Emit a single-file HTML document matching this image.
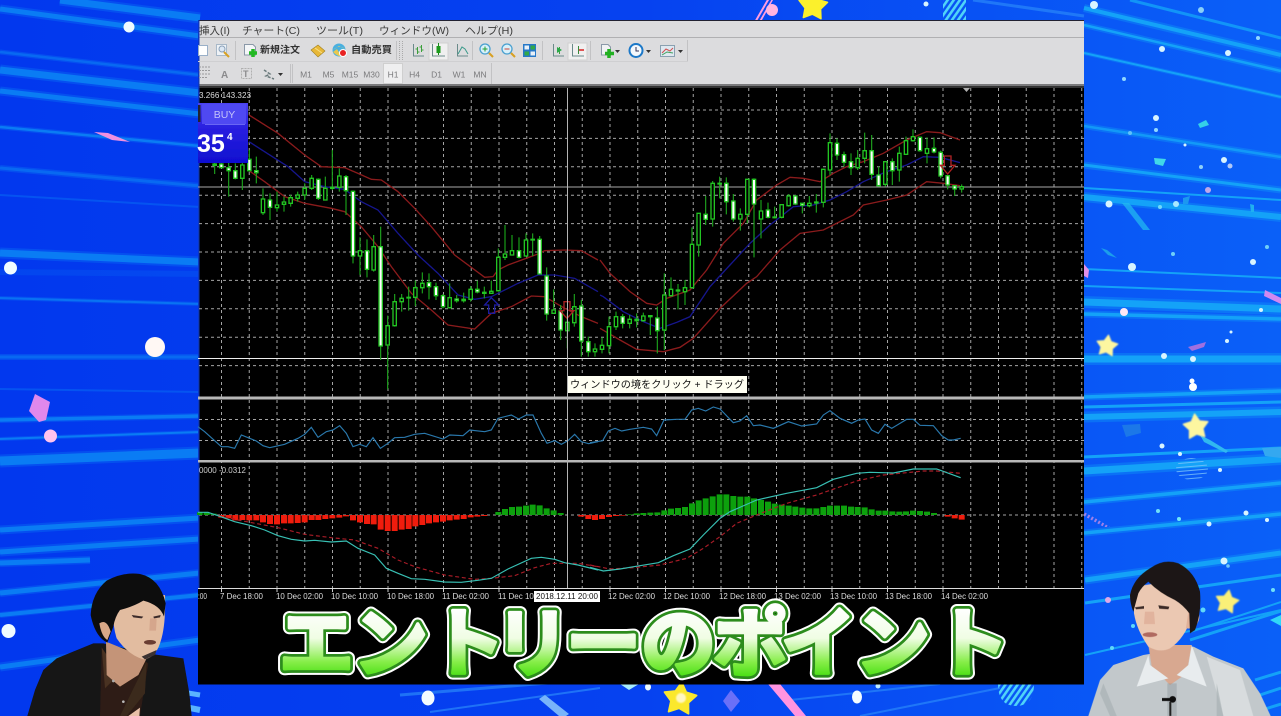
<!DOCTYPE html>
<html lang="ja"><head><meta charset="utf-8"><title>エントリーのポイント</title>
<style>html,body{margin:0;padding:0;background:#0a44f2;width:1281px;height:716px;overflow:hidden}svg{display:block}text{font-family:"Liberation Sans","Noto Sans CJK JP",sans-serif}</style></head>
<body>
<svg xmlns="http://www.w3.org/2000/svg" width="1281" height="716" viewBox="0 0 1281 716">
<defs>
<linearGradient id="bg" x1="0" x2="1" y1="0" y2="0"><stop offset="0" stop-color="#0238ee"/><stop offset=".5" stop-color="#0642f0"/><stop offset="1" stop-color="#0a60f8"/></linearGradient>
<linearGradient id="buy" x1="0" x2="0" y1="0" y2="1"><stop offset="0" stop-color="#4a42f0"/><stop offset=".4" stop-color="#2a20e0"/><stop offset="1" stop-color="#0f0fd0"/></linearGradient>
<linearGradient id="ttl" gradientUnits="userSpaceOnUse" x1="0" x2="0" y1="608" y2="680"><stop offset="0" stop-color="#fff"/><stop offset=".42" stop-color="#f0fde4"/><stop offset=".75" stop-color="#86ee48"/><stop offset="1" stop-color="#3cdc08"/></linearGradient>
<pattern id="cy" width="5" height="5" patternUnits="userSpaceOnUse" patternTransform="rotate(35)"><rect width="2.6" height="5" fill="#4fd4f8"/></pattern>
<pattern id="pk" width="4" height="4" patternUnits="userSpaceOnUse" patternTransform="rotate(30)"><rect width="2" height="4" fill="#ff9ce0"/></pattern>
<pattern id="lc" width="4" height="4" patternUnits="userSpaceOnUse" patternTransform="rotate(85)"><rect width="1" height="4" fill="#7cc4fa"/></pattern>
<filter id="b0" x="0" y="0" width="100%" height="100%"><feGaussianBlur stdDeviation=".35"/></filter>
<filter id="bf" x="-10%" y="-10%" width="120%" height="120%"><feGaussianBlur stdDeviation=".7"/></filter>
<filter id="bp" x="-10%" y="-10%" width="120%" height="120%"><feGaussianBlur stdDeviation="1.1"/></filter>
<polygon id="st" points="0,-1 .32,-.44 .95,-.31 .52,.17 .59,.81 0,.55 -.59,.81 -.52,.17 -.95,-.31 -.32,-.44" stroke-linejoin="round"/>
</defs>

<rect width="1281" height="716" fill="url(#bg)"/>

<!-- left streaks glow -->
<g stroke="#0a70f4" fill="none" opacity=".4">
<path d="M60 0L200 18" stroke-width="11"/><path d="M0 9L200 36" stroke-width="9"/><path d="M0 52L200 75" stroke-width="5"/><path d="M0 70L200 93" stroke-width="11"/><path d="M0 91L200 114" stroke-width="9"/><path d="M0 127L200 146" stroke-width="5"/><path d="M0 168L200 186" stroke-width="6"/><path d="M0 253L200 262" stroke-width="11"/><path d="M0 298L200 304" stroke-width="4"/><path d="M0 357L200 357" stroke-width="6"/><path d="M0 420L200 416" stroke-width="6"/><path d="M0 439L200 432" stroke-width="4"/><path d="M0 461L200 453" stroke-width="13"/><path d="M0 530L200 518" stroke-width="9"/><path d="M0 552L200 539" stroke-width="9"/><path d="M0 563L90 560" stroke-width="8"/><path d="M0 593L200 573" stroke-width="8"/><path d="M0 615L200 595" stroke-width="6"/><path d="M0 667L200 640" stroke-width="9"/>
</g>
<g stroke="#0a7cf4" fill="none">
<path d="M60 0L200 18" stroke-width="7"/><path d="M0 9L200 36" stroke-width="5"/><path d="M0 52L200 75" stroke-width="2.500" opacity=".6"/><path d="M0 70L200 93" stroke-width="7"/><path d="M0 91L200 114" stroke-width="5"/><path d="M0 127L200 146" stroke-width="2.500"/><path d="M0 168L200 186" stroke-width="3" opacity=".6"/><path d="M0 195L200 207" stroke-width="2" opacity=".4"/><path d="M0 253L200 262" stroke-width="7"/><path d="M0 272L200 274" stroke-width="6" opacity=".2"/><path d="M0 298L200 304" stroke-width="2" opacity=".8"/><path d="M0 357L200 357" stroke-width="3" opacity=".6"/><path d="M0 389L200 392" stroke-width="2" opacity=".4"/><path d="M0 420L200 416" stroke-width="3.500"/><path d="M0 439L200 432" stroke-width="2"/><path d="M0 461L200 453" stroke-width="9"/><path d="M0 530L200 518" stroke-width="5"/><path d="M0 552L200 539" stroke-width="5"/><path d="M0 563L90 560" stroke-width="5"/><path d="M0 593L200 573" stroke-width="5"/><path d="M0 615L200 595" stroke-width="4"/><path d="M0 667L200 640" stroke-width="5"/><path d="M188 693L200 695" stroke-width="5" stroke="#5ab4ff"/><path d="M190 708L200 710" stroke-width="6" stroke="#5ab4ff"/>
</g>
<!-- right streaks glow -->
<g stroke="#10a0f8" fill="none" opacity=".35">
<path d="M1084 8L1281 55" stroke-width="8"/><path d="M1084 25L1281 71" stroke-width="6"/><path d="M1084 53L1281 97" stroke-width="4"/><path d="M1084 126L1281 157" stroke-width="6"/><path d="M1084 165L1281 190" stroke-width="7"/><path d="M1084 197L1281 217" stroke-width="10"/><path d="M1084 302L1281 309" stroke-width="12"/><path d="M1084 314L1281 319" stroke-width="7"/><path d="M1084 359L1281 359" stroke-width="12"/><path d="M1084 397L1281 391" stroke-width="7"/><path d="M1084 417L1281 412" stroke-width="11"/><path d="M1084 471L1281 459" stroke-width="12"/><path d="M1084 502L1281 483" stroke-width="7"/><path d="M1084 533L1281 514" stroke-width="7"/><path d="M1085 580L1281 553" stroke-width="9"/>
</g>
<g stroke="#14a2f8" fill="none">
<path d="M1084 8L1281 55" stroke-width="4"/><path d="M1130 0L1281 38" stroke-width="3" opacity=".8"/><path d="M1084 25L1281 71" stroke-width="2.500"/><path d="M1084 53L1281 97" stroke-width="2"/><path d="M1084 126L1281 157" stroke-width="2.500" opacity=".8"/><path d="M1084 165L1281 190" stroke-width="3"/><path d="M1084 188L1281 200" stroke-width="2"/><path d="M1084 197L1281 217" stroke-width="6"/><path d="M1084 269L1281 278" stroke-width="2"/><path d="M1084 286L1281 293" stroke-width="2"/><path d="M1084 302L1281 309" stroke-width="7"/><path d="M1084 314L1281 319" stroke-width="3.500"/><path d="M1084 359L1281 359" stroke-width="7"/><path d="M1084 397L1281 391" stroke-width="3.500"/><path d="M1084 407L1281 402" stroke-width="3"/><path d="M1084 417L1281 412" stroke-width="6"/><path d="M1084 457L1281 448" stroke-width="3"/><path d="M1084 471L1281 459" stroke-width="7"/><path d="M1084 502L1281 483" stroke-width="3.500"/><path d="M1084 533L1281 514" stroke-width="3.500"/><path d="M1085 580L1281 553" stroke-width="5"/><path d="M1085 603L1281 575" stroke-width="3"/><path d="M1085 655L1281 610" stroke-width="2"/><path d="M1190 640L1281 611" stroke-width="3"/><path d="M1190 632L1281 602" stroke-width="2"/><path d="M1255 680L1281 672" stroke-width="3"/><path d="M1260 695L1281 688" stroke-width="3"/><path d="M1262 710L1281 704" stroke-width="3"/>
</g>
<!-- top/bottom streaks -->
<g stroke="#2a88fa" fill="none" opacity=".7"><path d="M973 0L1084 16" stroke-width="3"/><path d="M400 695L560 682" stroke-width="3"/><path d="M430 712L600 688" stroke-width="2"/><path d="M790 700L940 684" stroke-width="2"/><path d="M860 716L1000 688" stroke-width="2"/></g>

<!-- left decor -->
<g>
<polygon points="94,132 108,133 130,142 112,140" fill="#f090e0"/>
<polygon points="35,394 50,402 46,420 39,422 29,411" fill="#e088ec"/>
<circle cx="129" cy="27" r="5.500" fill="#eefcff"/><circle cx="10.500" cy="268" r="6.500" fill="#f0fcff"/><circle cx="155" cy="347" r="10" fill="#fff8f4"/><circle cx="50.500" cy="436" r="6.500" fill="#ffc4ee"/><circle cx="8.500" cy="631" r="7" fill="#f0fcff"/>
</g>
<!-- right decor -->
<g fill="#d8f4ff">
<circle cx="1094" cy="5" r="4"/><circle cx="1201" cy="10" r="3" fill="#8ad0f8"/><circle cx="1162" cy="49" r="3"/><circle cx="1228" cy="53" r="3"/><circle cx="1124" cy="79" r="2" fill="#90d8ff"/><circle cx="1258" cy="38" r="2" fill="#90d8ff"/><circle cx="1156" cy="118" r="3"/><circle cx="1156" cy="130" r="2" fill="#90d8ff"/><circle cx="1130" cy="133" r="2" fill="#60c0f8"/><circle cx="1185" cy="145" r="1.500"/><circle cx="1224" cy="160" r="3"/><circle cx="1230" cy="166" r="2.500" fill="#b0c8f8"/><circle cx="1201" cy="167" r="2" fill="#90d0f8"/><circle cx="1109" cy="204" r="3.500"/><circle cx="1176" cy="204" r="3" fill="#a8e8ff"/><circle cx="1160" cy="207" r="2" fill="#70d8f8"/><circle cx="1208" cy="190" r="3" fill="#c0a8e8"/><circle cx="1132" cy="267" r="4"/><circle cx="1253" cy="262" r="3"/><circle cx="1173" cy="254" r="2" fill="#70d0f8"/><circle cx="1267" cy="247" r="2" fill="#70d0f8"/><circle cx="1124" cy="312" r="4" fill="#ffe8f4"/><circle cx="1261" cy="310" r="2"/><circle cx="1227" cy="341" r="2"/><circle cx="1231" cy="332" r="1.500"/><circle cx="1164" cy="356" r="3"/><circle cx="1193" cy="359" r="3"/><circle cx="1193" cy="387" r="4" fill="#fff"/><circle cx="1192" cy="381" r="2.500" fill="#fff"/><circle cx="1162" cy="446" r="2.500"/><circle cx="1180" cy="454" r="2"/><circle cx="1220" cy="470" r="2"/><circle cx="1158" cy="511" r="2" fill="#70e0f8"/><circle cx="1179" cy="519" r="2" fill="#70e8f8"/><circle cx="1209" cy="524" r="2.500"/><circle cx="1246" cy="513" r="2.500"/><circle cx="1267" cy="520" r="2"/><circle cx="1224" cy="561" r="3.500"/><circle cx="1228" cy="566" r="1.800" fill="#70c8f8"/><circle cx="1108" cy="600" r="3" fill="#e0a8e8"/><circle cx="1203" cy="610" r="2.500" fill="#60d8f8"/><circle cx="1273" cy="590" r="2" fill="#70e0f8"/><circle cx="1133" cy="626" r="2" fill="#60d8f8"/><circle cx="1112" cy="648" r="2" fill="#60d8f8"/>
<polygon points="1206,120 1209,125 1200,128 1198,124" fill="#34d0e8"/>
<polygon points="1154,158 1166,159 1163,166 1155,164" fill="#40d8e8"/>
<polygon points="1122,203 1129,203 1150,230 1143,230" fill="#22b8f0" opacity=".75"/>
<polygon points="1101,248 1107,250 1117,258 1108,255" fill="#20b0e8" opacity=".8"/>
<polygon points="1084,264 1089,270 1088,278 1084,276" fill="#e090e8"/>
<polygon points="1265,290 1281,298 1281,304 1264,296" fill="#d088f0"/>
<polygon points="1188,347 1206,342 1204,347 1192,351" fill="#a070e0"/>
<polygon points="1200,435 1210,440 1228,451 1226,453 1204,442" fill="#30b8f0"/>
<polygon points="1122,425 1140,424 1141,433 1126,437" fill="#1c78e8"/>
<polygon points="1262,448 1281,447 1281,458 1265,456" fill="#34a8f0"/>
<polygon points="1183,198 1190,196 1188,204 1183,204" fill="#1c98f0"/>
<polygon points="1250,204 1254,205 1254,212 1251,212" fill="#20b0f0"/>
<ellipse cx="1192" cy="469" rx="16" ry="11" fill="url(#lc)" opacity=".8"/>
<polygon points="1084,512 1095,518 1110,527 1104,527 1084,516" fill="url(#pk)" opacity=".6"/>
<polygon points="1270,620 1281,615 1281,626" fill="#30d8f8"/>
</g>
<g fill="#fdf6a0" filter="url(#bf)">
<use href="#st" transform="translate(1107 346) scale(11) rotate(8)" stroke="#fdf6a0" stroke-width=".1"/>
<use href="#st" transform="translate(1196 427) scale(13) rotate(-6)" stroke="#fdf6a0" stroke-width=".1"/>
<use href="#st" transform="translate(1227 602) scale(12) rotate(10)" fill="#fbf078" stroke="#fbf078" stroke-width=".1"/>
</g>
<!-- top decor -->
<g>
<polygon points="755,20 766,0 773,0 762,20" fill="url(#pk)"/><circle cx="772" cy="10" r="6" fill="#ffb4e0"/>
<use href="#st" transform="translate(813 6) scale(15) rotate(4)" fill="#fbf02c" stroke="#fbf02c" stroke-width=".1"/>
<circle cx="926" cy="4" r="2.500" fill="#d8f4ff"/><rect x="943" y="0" width="23" height="21" fill="url(#cy)"/>
</g>
<!-- bottom decor -->
<g>
<ellipse cx="428" cy="698" rx="6.500" ry="7.500" fill="#f4fcff"/>
<polygon points="539,699 545,695 569,714 566,716 559,716" fill="#78b4fa"/>
<polygon points="620,684 639,684 629,690" fill="#a8ecfa"/><ellipse cx="648" cy="687" rx="3" ry="3.500" fill="#eefcff"/>
<use href="#st" transform="translate(680 699) scale(17) rotate(6)" fill="#fbe82c" stroke="#fbe82c" stroke-width=".1"/><circle cx="681" cy="698" r="5" fill="#fff6c0" filter="url(#bf)"/>
<polygon points="731,690 740,701 731,712 723,701" fill="#6a70f8"/>
<polygon points="768,684 780,684 806,716 795,716" fill="#ff94e0"/>
<ellipse cx="857" cy="697" rx="5" ry="6.500" fill="#f4fcff"/><circle cx="878" cy="686" r="2.500" fill="#c0ecff"/>
<path d="M998 684H1034Q1034 706 1016 706Q998 706 998 684Z" fill="url(#cy)"/>
</g>

<g filter="url(#b0)">
<!-- window -->
<rect x="198" y="20.500" width="886" height="664" fill="#000"/>
<rect x="198" y="21" width="886" height="64" fill="#dcdcde"/>
<rect x="198" y="20" width="886" height="1" fill="#223"/>
<rect x="198" y="37" width="886" height="1" fill="#b0b0b2"/>
<rect x="198" y="84" width="886" height="2" fill="#7a7a7c"/>
<rect x="198" y="86" width="886" height="2" fill="#333"/>
<rect x="198" y="20" width="1.500" height="664" fill="#1038c0"/>

<!-- menu -->
<g font-size="10.500" fill="#3a3a3a">
<text x="199" y="34">挿入(I)</text>
<text x="242" y="34" textLength="58" lengthAdjust="spacingAndGlyphs">チャート(C)</text>
<text x="316" y="34" textLength="47" lengthAdjust="spacingAndGlyphs">ツール(T)</text>
<text x="379" y="34" textLength="70" lengthAdjust="spacingAndGlyphs">ウィンドウ(W)</text>
<text x="465" y="34" textLength="48" lengthAdjust="spacingAndGlyphs">ヘルプ(H)</text>
</g>

<!-- toolbar frames -->
<g fill="none" stroke="#c2c2c4">
<path d="M235.500 41V60M472.500 41V60M542.500 41V60M590.500 41V60M396.500 41V60"/>
<path d="M399.500 41V60M402.500 41V60" stroke="#aaa" stroke-dasharray="1 1"/>
<path d="M687.500 40V61M290.500 64V83M292.500 64V83M491.500 63V84" />
<path d="M198 61.500H688" stroke="#cfcfd1"/>
</g>
<rect x="429" y="43" width="19" height="17" fill="#f0f0f0" stroke="#d0d0d0"/>
<rect x="568" y="43" width="19" height="17" fill="#f0f0f0" stroke="#d0d0d0"/>
<rect x="383.500" y="63.500" width="19" height="20" fill="#efeff0" stroke="#cfcfcf"/>

<!-- toolbar icons row 1 -->
<rect x="198.500" y="45.500" width="9" height="10" fill="#fff" stroke="#9ab0c8"/>
<rect x="216.500" y="44.500" width="10" height="11" fill="#eef2f6" stroke="#a8b8c8"/><circle cx="222" cy="49" r="3" fill="#dde8f4" stroke="#8aa0b8"/><path d="M224 52L229 57" stroke="#d8a020" stroke-width="2"/>
<path d="M244.500 44.500H253L255.500 47V55H244.500Z" fill="#f4f6f8" stroke="#8a98a8"/><path d="M253 49V57M249 53H257" stroke="#22b822" stroke-width="3.500"/>
<text x="260" y="53" font-size="9.800" font-weight="700" fill="#333" textLength="40" lengthAdjust="spacingAndGlyphs">新規注文</text>
<polygon points="311,50 318,45 325,51 318,57" fill="#e8b838" stroke="#a08020" stroke-width=".6"/><path d="M315 48L322 53" stroke="#f8e088"/>
<circle cx="339" cy="50" r="6.500" fill="#48b0e0"/><path d="M333 50Q339 44 345 49L339 46Z" fill="#f0d060"/><path d="M333 52Q338 57 341 56L337 49Z" fill="#e8c850"/><circle cx="343" cy="53" r="3.500" fill="#e82020" stroke="#fff"/>
<text x="351" y="53" font-size="9.800" font-weight="700" fill="#333" textLength="41" lengthAdjust="spacingAndGlyphs">自動売買</text>
<g fill="none" stroke="#6a8a8a">
<path d="M413.500 44V56H424" /><path d="M417.500 47V54M415.500 49H417.500M417.500 52H419.500M421.500 45V52M419.500 47H421.500M421.500 50H423.500" stroke="#3aa03a"/>
<path d="M432.500 44V56H445"/><path d="M438.500 43V55" stroke="#1a8a1a"/>
<path d="M457.500 44V56H468"/><path d="M458 54L462 47L465 49L468 54" stroke="#3a9a8a"/>
<path d="M553.500 44V56H564"/><path d="M559.500 47V54" stroke="#3aa03a"/>
<path d="M572.500 44V56H584"/><path d="M578.500 46V54" stroke="#3a8a3a"/>
</g>
<rect x="436.500" y="46" width="4" height="7" fill="#1a9a1a"/>
<polygon points="557,47 562,50 557,53" fill="#2aa84a"/>
<path d="M579 50H584" stroke="#d82020" stroke-width="1.500"/>
<circle cx="485" cy="49" r="5" fill="#d8f0fa" stroke="#4aa0d0" stroke-width="1.300"/><path d="M482.500 49H487.500M485 46.500V51.500" stroke="#20a030"/><path d="M489 53L493 57" stroke="#d8a020" stroke-width="2"/>
<circle cx="507" cy="49" r="5" fill="#d8f0fa" stroke="#4aa0d0" stroke-width="1.300"/><path d="M504.500 49H509.500" stroke="#d04030"/><path d="M511 53L515 57" stroke="#d8a020" stroke-width="2"/>
<rect x="523" y="44" width="13" height="13" fill="#2878c8"/><rect x="524.500" y="45.500" width="4.500" height="4" fill="#e8f0f8"/><rect x="530.500" y="45.500" width="4.500" height="4" fill="#30a848"/><rect x="524.500" y="51.500" width="4.500" height="4" fill="#30a848"/><rect x="530.500" y="51.500" width="4.500" height="4" fill="#e8f0f8"/>
<path d="M601.500 44.500H608L610.500 47V55H601.500Z" fill="#f0f2f4" stroke="#8a98a8"/><path d="M609 49V58M605 53.500H614" stroke="#20b020" stroke-width="3.500"/>
<polygon points="615,50 620,50 617.500,53" fill="#333"/>
<circle cx="636" cy="50.500" r="6.500" fill="#f4f8fc" stroke="#1a78c8" stroke-width="2"/><path d="M636 47V51H639" stroke="#335" fill="none"/>
<polygon points="646,50 651,50 648.500,53" fill="#333"/>
<rect x="660.500" y="45.500" width="14" height="11" fill="#dfe8f0" stroke="#8aa0b0"/><path d="M662 53L666 49L670 51L673 48" stroke="#d05050" fill="none"/><path d="M662 55L667 52L673 53" stroke="#40a060" fill="none"/>
<polygon points="678,50 683,50 680.500,53" fill="#333"/>

<!-- row 2 -->
<path d="M199 67H210M199 70.500H210M199 74H210M199 77.500H207" stroke="#9a9a9c" stroke-dasharray="2 1"/>
<text x="221" y="78" font-size="10" font-weight="700" fill="#8a8a8c">A</text>
<rect x="241.500" y="68.500" width="10" height="10" fill="none" stroke="#b0b0b0" stroke-dasharray="2 1"/><text x="243" y="77" font-size="9" font-weight="700" fill="#8a8a8c">T</text>
<path d="M264 70L270 74L266 76L274 79" stroke="#6a7a7c" stroke-width="1.500" fill="none" stroke-dasharray="3 1.500"/>
<polygon points="278,73 283,73 280.500,76" fill="#333"/>
<g font-size="8.500" fill="#7a7a7c" text-anchor="middle">
<text x="306" y="77.500">M1</text><text x="328.500" y="77.500">M5</text><text x="350" y="77.500">M15</text><text x="371.500" y="77.500">M30</text><text x="393" y="77.500">H1</text><text x="414.500" y="77.500">H4</text><text x="436.500" y="77.500">D1</text><text x="459" y="77.500">W1</text><text x="480" y="77.500">MN</text>
</g>

<!-- chart grid -->
<g stroke="#a4a4a4" stroke-dasharray="3 3" fill="none">
<path d="M199 110H1084M199 138.400H1084M199 166.800H1084M199 195.200H1084M199 223.600H1084M199 252H1084M199 280.400H1084M199 308.800H1084M199 337.200H1084M199 365.600H1084M199 419.500H1084M199 440.500H1084M199 515H1084"/>
<path d="M221.500 88V588M249.250 88V588M277 88V588M304.750 88V588M332.500 88V588M360.250 88V588M388 88V588M415.750 88V588M443.500 88V588M471.250 88V588M499 88V588M526.750 88V588M554.500 88V588M582.250 88V588M610 88V588M637.750 88V588M665.500 88V588M693.250 88V588M721 88V588M748.750 88V588M776.500 88V588M804.250 88V588M832 88V588M859.750 88V588M887.500 88V588M915.250 88V588M943 88V588M970.750 88V588M998.500 88V588M1026.250 88V588M1054 88V588M1081.750 88V588"/>
</g>
<rect x="198" y="396.500" width="886" height="3" fill="#b8b8b8"/>
<rect x="198" y="460" width="886" height="2.500" fill="#b8b8b8"/>
<rect x="198" y="588" width="886" height="1" fill="#dcdcdc"/>
<rect x="198" y="589" width="886" height="95" fill="#000"/>
<path d="M221.500 589v3M277 589v3M332.500 589v3M388 589v3M443.500 589v3M499 589v3M554.500 589v3M610 589v3M665.500 589v3M721 589v3M776.500 589v3M832 589v3M887.500 589v3M943 589v3" stroke="#ccc"/>
<polygon points="963,88 970,88 966.500,92" fill="#b0b0b0"/>

<!-- horizontal cross -->
<rect x="198" y="186.500" width="886" height="1" fill="#a8a8a8"/>
<rect x="198" y="358" width="886" height="1" fill="#eee"/>

<!-- left half main -->
<g transform="translate(198 150) scale(.33333)">
<g fill="none" stroke-width="4">
<path stroke="#8a1a1c" d="M153 -105L240 -50L320 15L370 50L440 53L480 70L520 88L550 90L600 125L650 175L700 230L770 315L860 382L885 380L900 360L930 345L1020 312L1040 302L1100 300L1150 302L1200 330"/>
<path stroke="#14148c" d="M153 -25L270 50L320 95L380 110L440 118L490 155L540 180L600 250L660 315L720 370L780 435L830 448L880 440L910 425L960 400L1020 375L1070 375L1130 385L1200 425"/>
<path stroke="#8a1a1c" d="M150 60L200 95L260 140L320 160L400 175L440 185L490 230L540 290L580 350L640 430L700 480L750 525L830 537L880 490L940 470L1000 438L1040 440L1100 475L1150 500L1200 520"/>
</g>
<path fill="none" stroke="#1fa01f" stroke-width="3.500" d="M50 38V72M70 38V55M92 38V140M112 40V88M133 20V120M154 0V65M175 20V100M195 115V195M216 130V210M237 125V185M258 140V185M278 135V170M299 125V155M320 100V150M341 75V120M361 85V150M382 80V150M403 0V120M424 55V125M444 75V195M465 122V340M486 262V375M507 268V382M527 255V365M548 230V630M569 497V718M590 432V530M611 432V485M632 410V482M652 392V468M673 367V430M693 370V448M714 398V450M735 432V475M755 400V475M776 435V458M797 428V458M818 408V455M838 392V430M859 410V445M880 392V432M901 295V425M921 225V330M942 255V315M963 262V325M984 250V320M1004 250V318M1025 258V345M1046 352V512M1067 418V490M1088 465V570M1108 490V595M1129 432V530M1150 450V620M1171 560V620M1191 580V620"/>
<path fill="#fff" stroke="#22c422" stroke-width="4" d="M45 42h10V46h-10zM65 42h10V53h-10zM87 53h10V62h-10zM107 62h10V85h-10zM149 28h10V62h-10zM170 62h10V68h-10zM211 150h10V172h-10zM356 88h10V145h-10zM439 80h10V122h-10zM460 124h10V318h-10zM502 302h10V358h-10zM543 290h10V588h-10zM688 398h10V410h-10zM709 410h10V437h-10zM730 437h10V470h-10zM771 447h10V452h-10zM792 448h10V452h-10zM833 418h10V426h-10zM854 427h10V430h-10zM958 302h10V322h-10zM999 268h10V270h-10zM1020 268h10V372h-10zM1041 378h10V492h-10zM1083 483h10V540h-10zM1145 468h10V573h-10zM1166 575h10V605h-10zM398 112h10V115h-10zM627 442h10V444h-10z"/>
<path fill="#000" stroke="#22c422" stroke-width="4" d="M128 45h10V85h-10zM190 147h10V188h-10zM232 165h10V173h-10zM253 156h10V163h-10zM273 143h10V160h-10zM294 135h10V145h-10zM315 115h10V135h-10zM336 85h10V115h-10zM377 115h10V150h-10zM419 78h10V112h-10zM481 302h10V318h-10zM522 290h10V360h-10zM564 527h10V585h-10zM585 455h10V527h-10zM606 445h10V455h-10zM647 413h10V442h-10zM668 400h10V413h-10zM750 443h10V473h-10zM813 418h10V448h-10zM875 424h10V430h-10zM896 322h10V422h-10zM916 312h10V322h-10zM937 302h10V315h-10zM979 270h10V318h-10zM1062 480h10V490h-10zM1103 517h10V542h-10zM1124 470h10V518h-10zM1186 597h10V605h-10z"/>
<path fill="none" stroke="#1c1ca0" stroke-width="4" d="M880 443L860 465H872V490H890V465H902Z"/>
<path fill="none" stroke="#a82020" stroke-width="4" d="M1098 455H1116V482H1128L1107 505L1086 482H1098Z"/>
</g>

<!-- right half main -->
<g transform="translate(580 120) scale(.33333)">
<g fill="none" stroke-width="4">
<path stroke="#8a1a1c" d="M60 420L90 460L150 515L200 550L230 555L260 535L330 510L380 450L430 370L490 310L530 240L590 195L630 172L670 175L720 185L760 160L800 140L850 125L910 100L980 60L1040 35L1080 38L1140 60"/>
<path stroke="#14148c" d="M60 525L70 530L130 575L190 605L240 625L290 607L330 590L390 500L450 435L510 370L570 315L640 260L700 255L750 240L800 215L850 185L920 155L980 135L1030 110L1080 112L1140 128"/>
<path stroke="#8a1a1c" d="M60 625L120 660L170 688L250 695L300 682L340 655L420 565L500 490L530 470L600 390L660 340L730 330L820 285L850 255L920 240L980 225L1040 185L1090 190L1140 197"/>
</g>
<path fill="none" stroke="#1fa01f" stroke-width="3.500" d="M66 652V700M87 590V700M108 575V630M128 582V625M149 585V625M170 580V622M190 578V605M211 585V645M232 560V700M253 460V690M273 472V530M294 492V568M315 480V555M336 322V505M356 280V410M377 228V315M398 183V320M419 170V235M439 172V283M460 222V305M481 265V332M502 178V310M522 175V412M543 240V355M564 248V295M584 260V295M605 252V295M626 222V260M646 225V255M667 250V280M688 228V262M709 222V278M730 148V262M750 40V165M771 55V120M792 95V140M813 100V165M833 90V150M854 38V130M875 45V180M896 140V200M916 125V200M937 115V195M958 80V185M978 50V105M999 28V65M1020 50V95M1041 52V130M1062 52V100M1082 92V175M1103 165V208M1124 195V228M1145 193V218"/>
<path fill="#fff" stroke="#22c422" stroke-width="4" d="M123 590h10V610h-10zM227 594h10V632h-10zM289 510h10V513h-10zM372 283h10V298h-10zM414 190h10V192h-10zM434 190h10V245h-10zM455 243h10V297h-10zM517 178h10V252h-10zM559 270h10V292h-10zM579 291h10V293h-10zM641 228h10V252h-10zM662 250h10V256h-10zM206 587h10V590h-10zM165 598h10V602h-10zM704 246h10V249h-10zM766 70h10V105h-10zM787 104h10V127h-10zM808 125h10V143h-10zM870 92h10V163h-10zM891 165h10V197h-10zM932 125h10V152h-10zM1015 52h10V92h-10zM1057 85h10V96h-10zM1077 97h10V168h-10zM1098 167h10V195h-10zM1119 197h10V207h-10z"/>
<path fill="#000" stroke="#22c422" stroke-width="4" d="M61 676h10V688h-10zM82 620h10V677h-10zM103 590h10V620h-10zM144 598h10V610h-10zM185 588h10V602h-10zM248 525h10V630h-10zM268 508h10V527h-10zM310 503h10V515h-10zM331 373h10V503h-10zM351 280h10V375h-10zM393 190h10V297h-10zM476 283h10V297h-10zM497 178h10V283h-10zM538 273h10V297h-10zM600 254h10V292h-10zM621 228h10V257h-10zM683 250h10V257h-10zM725 148h10V247h-10zM745 68h10V150h-10zM828 115h10V143h-10zM849 92h10V115h-10zM911 125h10V193h-10zM953 100h10V150h-10zM973 62h10V103h-10zM994 50h10V62h-10zM1036 86h10V100h-10zM1140 200h10V207h-10z"/>
<path fill="none" stroke="#b02020" stroke-width="4" d="M1093 108H1113V136H1125L1103 162L1081 136H1093Z"/>
</g>

<!-- RSI + MACD left -->
<g transform="translate(198 395) scale(.33333)">
<path fill="none" stroke="#2a78ac" stroke-width="3.500" d="M0 95L20 110L70 155L90 155L110 160L130 120L155 130L175 138L195 152L215 158L260 148L300 130L320 118L340 97L360 127L385 110L405 105L425 92L445 115L465 155L485 148L505 155L525 128L547 160L570 145L590 128L620 127L650 118L680 115L735 132L755 120L795 122L815 105L860 110L880 105L900 70L940 60L962 72L985 60L1005 60L1030 115L1047 145L1070 137L1090 148L1110 137L1130 118L1150 140L1172 146L1200 140"/>
<path fill="none" stroke="#0fa00f" stroke-width="18" d="M5 360V352M26 360V352M47 360V356M901 360V351M921 360V342M942 360V336M963 360V335M984 360V332M1004 360V329M1025 360V331M1046 360V340M1067 360V346M1088 360V354"/>
<path fill="none" stroke="#f01a08" stroke-width="18" d="M70 360V368M92 360V370M112 360V376M133 360V375M154 360V376M175 360V376M195 360V382M216 360V387M237 360V388M258 360V385M278 360V385M299 360V384M320 360V382M341 360V375M361 360V375M382 360V372M403 360V370M424 360V368M444 360V364M465 360V376M486 360V382M507 360V387M527 360V388M548 360V404M569 360V408M590 360V408M611 360V404M632 360V402M652 360V394M673 360V390M693 360V385M714 360V382M735 360V380M755 360V376M776 360V374M797 360V372M818 360V367M838 360V365M859 360V363M1150 360V365M1171 360V372M1191 360V375"/>
<path fill="none" stroke="#a81c28" stroke-width="3.500" stroke-dasharray="12 8" d="M60 362L120 375L240 398L320 418L400 428L470 435L540 460L600 495L650 515L740 540L830 553L880 550L950 542L1010 518L1060 505L1140 505L1200 515"/>
<path fill="none" stroke="#38c0b4" stroke-width="3.500" d="M0 352L30 352L60 362L110 380L160 392L200 405L240 422L280 433L320 438L350 436L400 441L445 438L480 460L530 480L565 520L600 535L640 551L680 553L740 561L790 562L840 556L880 550L930 522L1000 490L1030 487L1070 493L1100 503L1140 510L1200 525"/>
</g>
<!-- RSI + MACD right -->
<g transform="translate(590 395) scale(.33333)">
<path fill="none" stroke="#2a78ac" stroke-width="3.500" d="M0 143L38 137L55 108L75 100L95 108L120 103L160 97L185 102L200 122L222 75L260 73L285 73L305 45L325 40L347 48L370 36L390 42L430 83L450 78L470 62L490 92L510 90L550 100L595 80L635 93L680 87L700 60L720 47L750 70L785 85L805 75L825 72L845 105L865 115L885 88L905 100L950 73L970 73L990 91L1030 92L1055 122L1075 135L1090 135L1112 130"/>
<path fill="none" stroke="#0fa00f" stroke-width="18" d="M119 360V358M140 360V355M160 360V354M181 360V353M202 360V352M223 360V346M243 360V341M264 360V339M285 360V336M306 360V325M326 360V316M347 360V310M368 360V304M389 360V298M409 360V298M430 360V303M451 360V305M472 360V305M492 360V310M513 360V315M534 360V320M554 360V326M575 360V329M596 360V332M616 360V335M637 360V338M658 360V340M679 360V340M700 360V336M720 360V332M741 360V332M762 360V332M783 360V335M803 360V336M824 360V337M845 360V343M866 360V347M886 360V347M907 360V349M928 360V350M948 360V349M969 360V347M990 360V348M1011 360V350M1032 360V354"/>
<path fill="none" stroke="#f01a08" stroke-width="18" d="M15 360V375M36 360V372M57 360V366M78 360V363M98 360V362M1073 360V365M1094 360V370M1115 360V374"/>
<path fill="none" stroke="#a81c28" stroke-width="3.500" stroke-dasharray="12 8" d="M0 510L60 522L130 518L210 510L290 490L340 460L390 425L440 385L500 360L590 325L680 300L800 258L880 240L1000 228L1040 228L1112 235"/>
<path fill="none" stroke="#38c0b4" stroke-width="3.500" d="M0 517L40 528L90 522L150 512L205 503L250 482L300 462L340 420L390 370L420 350L500 315L590 295L680 278L730 253L800 235L840 232L910 234L970 222L1040 222L1112 248"/>
</g>

<!-- crosshair -->
<rect x="567" y="88" width="1" height="500" fill="#b4b4b4"/>

<!-- labels -->
<text x="199" y="98" font-size="8" fill="#ddd" textLength="52" lengthAdjust="spacingAndGlyphs">3.266 143.323</text>
<text x="199" y="473" font-size="8.500" fill="#ccc" textLength="47" lengthAdjust="spacingAndGlyphs">0000 -0.0312</text>

<!-- BUY panel -->
<rect x="198" y="103" width="50" height="60" fill="url(#buy)"/>
<rect x="198" y="105" width="2.500" height="17" fill="#223"/>
<rect x="202" y="104" width="44" height="20" fill="#4f48f2"/>
<rect x="205" y="124" width="40" height="1" fill="#6a66f4"/>
<text x="224.500" y="118" font-size="10.500" fill="#c4c4fa" text-anchor="middle">BUY</text>
<text x="197" y="152" font-size="25" font-weight="700" fill="#fff">35</text>
<text x="227" y="140" font-size="10" font-weight="700" fill="#fff">4</text>

<!-- tooltip -->
<rect x="568" y="376" width="179" height="17" fill="#fffff2"/>
<text x="570" y="388" font-size="10" fill="#111" textLength="174" lengthAdjust="spacingAndGlyphs">ウィンドウの境をクリック + ドラッグ</text>

<!-- time axis -->
<g font-size="8.500" fill="#ddd">
<text x="198" y="599" textLength="9" lengthAdjust="spacingAndGlyphs">:00</text>
<text x="220" y="599" textLength="43" lengthAdjust="spacingAndGlyphs">7 Dec 18:00</text>
<text x="276" y="599" textLength="47" lengthAdjust="spacingAndGlyphs">10 Dec 02:00</text>
<text x="331" y="599" textLength="47" lengthAdjust="spacingAndGlyphs">10 Dec 10:00</text>
<text x="387" y="599" textLength="47" lengthAdjust="spacingAndGlyphs">10 Dec 18:00</text>
<text x="442" y="599" textLength="47" lengthAdjust="spacingAndGlyphs">11 Dec 02:00</text>
<text x="498" y="599" textLength="47" lengthAdjust="spacingAndGlyphs">11 Dec 10:00</text>
<rect x="534" y="591" width="66" height="11" fill="#fff"/>
<text x="536" y="599" fill="#111" textLength="62" lengthAdjust="spacingAndGlyphs">2018.12.11 20:00</text>
<text x="608" y="599" textLength="47" lengthAdjust="spacingAndGlyphs">12 Dec 02:00</text>
<text x="663" y="599" textLength="47" lengthAdjust="spacingAndGlyphs">12 Dec 10:00</text>
<text x="719" y="599" textLength="47" lengthAdjust="spacingAndGlyphs">12 Dec 18:00</text>
<text x="774" y="599" textLength="47" lengthAdjust="spacingAndGlyphs">13 Dec 02:00</text>
<text x="830" y="599" textLength="47" lengthAdjust="spacingAndGlyphs">13 Dec 10:00</text>
<text x="885" y="599" textLength="47" lengthAdjust="spacingAndGlyphs">13 Dec 18:00</text>
<text x="941" y="599" textLength="47" lengthAdjust="spacingAndGlyphs">14 Dec 02:00</text>
</g>
</g>

<!-- title -->
<g font-size="75" font-weight="700" stroke-linejoin="round">
<text x="279 353 430 495 566 641 713 781 855 934" y="670" fill="#fff" stroke="#fff" stroke-width="13">エントリーのポイント</text>
<text x="279 353 430 495 566 641 713 781 855 934" y="670" fill="#2c8c1c" stroke="#2c8c1c" stroke-width="9">エントリーのポイント</text>
<text x="279 353 430 495 566 641 713 781 855 934" y="670" fill="url(#ttl)" stroke="url(#ttl)" stroke-width="3.500">エントリーのポイント</text>
</g>

<!-- left person -->
<g transform="translate(0 560) scale(.33333)" filter="url(#bp)">
<path fill="#141218" d="M82 468L105 390L130 330L170 295L280 250L310 250L440 280L550 295L568 400L575 468Z"/>
<path fill="#2e1c12" d="M305 262L300 468L420 468L445 310L430 300L360 340Z"/>
<path fill="#4a3020" d="M305 262L315 385L345 355L330 300Z"/>
<path fill="#3a2a1c" d="M420 345L440 305L435 400L380 468L360 468Z"/>
<path fill="#c49478" d="M318 245L320 345L360 380L415 345L440 295Z"/>
<path fill="#e2bca0" d="M340 115L495 105Q498 200 480 250Q465 295 430 298Q385 285 350 235Q335 190 340 115Z"/>
<path fill="#0e0c10" d="M272 165Q275 100 320 62Q370 35 420 42Q480 55 497 130L492 170Q480 135 430 122Q400 140 360 150Q345 170 340 200L322 248Q285 230 272 165Z"/>
<path fill="#d8a888" d="M298 190Q320 175 332 215L322 240Q305 230 298 190Z"/>
<path fill="#3a2c2a" d="M395 165L430 170L425 175L400 172ZM460 170L482 165L480 172L462 175Z"/>
<path fill="#c89078" opacity=".5" d="M450 175L470 175L468 212L448 212Z"/>
<ellipse cx="450" cy="247" rx="18" ry="7" fill="#6a3c32"/>
<path fill="#3a3030" d="M425 290L470 270L465 285L435 298Z"/>
<circle cx="370" cy="425" r="4" fill="#bbb"/><circle cx="340" cy="363" r="4" fill="#aaa"/>
<path fill="#e8c0a8" d="M385 468L420 443L418 468Z"/>
</g>

<!-- right person -->
<g transform="translate(1080 550) scale(.33333)" filter="url(#bp)">
<path fill="#c2c8cb" d="M25 498L60 390L100 345L190 315L340 290L400 320L490 355L540 430L572 498Z"/>
<path fill="#d8dcde" d="M380 320L480 360L520 498L430 498Z"/>
<path fill="#a8b0b4" d="M70 400L110 498L90 498L60 430ZM410 400L430 498L410 498Z" opacity=".7"/>
<path fill="#d8a890" d="M205 285L215 350L270 405L320 370L335 285Z"/>
<path fill="#e8ecee" d="M205 315L170 410L265 385L210 345ZM335 285L380 410L290 375L325 345Z"/>
<path fill="#8a9296" d="M262 400H290V498H262Z" opacity=".4"/>
<path fill="#ebc8b2" d="M162 110L332 85L335 200Q315 265 270 295Q240 310 205 290Q170 240 162 190Z"/>
<path fill="#e0b098" d="M325 185Q360 170 358 205Q350 240 318 235Z"/>
<path fill="#1a1412" d="M150 135Q160 85 210 55Q250 25 295 40Q345 65 360 125Q365 190 345 240L330 250L328 190Q310 165 285 150Q240 130 205 95Q185 110 175 130L160 185Q150 160 150 135Z"/>
<path fill="#3a2c28" d="M165 172L192 168L192 176L168 178ZM235 166L268 170L265 178L238 176Z"/>
<path fill="#d89e88" opacity=".5" d="M195 185L222 185L225 222L192 222Z"/>
<ellipse cx="210" cy="254" rx="22" ry="7" fill="#b06a60"/>
<rect x="246" y="444" width="36" height="9" fill="#111"/><circle cx="278" cy="448" r="10" fill="#111"/><rect x="268" y="455" width="6" height="43" fill="#222"/>
</g>
</svg>
</body></html>
